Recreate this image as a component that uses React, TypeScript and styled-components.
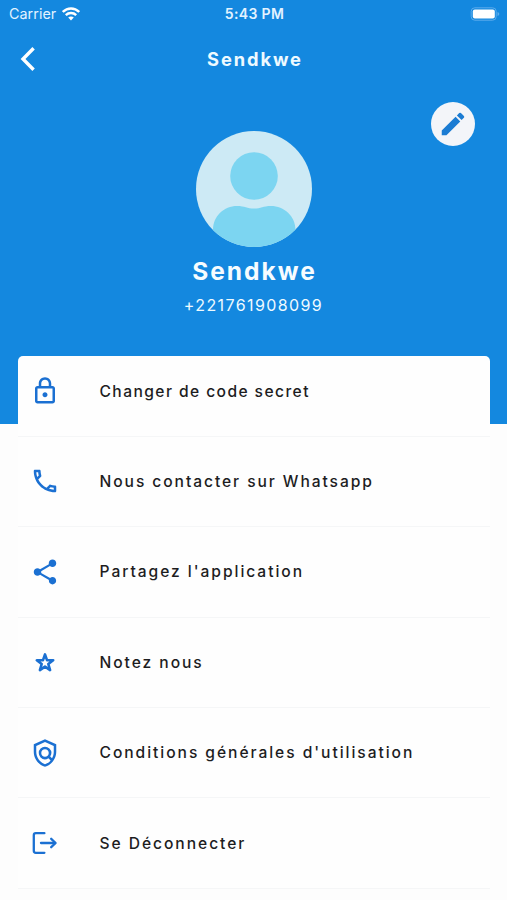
import React from "react";
import styled, { createGlobalStyle } from "styled-components";
import { MdEdit, MdOutlineLock, MdOutlinePhone, MdOutlinePolicy, MdShare } from "react-icons/md";

const GlobalStyle = createGlobalStyle`
  * { box-sizing: border-box; }
  body {
    margin: 0;
    background: #fdfdfd;
    font-family: Inter, "Liberation Sans", sans-serif;
  }
`;

const Screen = styled.main`
  width: 507px;
  height: 900px;
  overflow: hidden;
  background: linear-gradient(#1488df 0 424px, #fdfdfd 424px);
`;

const StatusBar = styled.div`
  display: grid;
  grid-template-columns: 1fr auto 1fr;
  align-items: center;
  height: 27px;
  padding: 0 7px 0 9px;
  color: #e3f3ff;
`;

const Carrier = styled.div`
  display: flex;
  align-items: center;
  gap: 6px;
  font-size: 14.3px;
  letter-spacing: 0.05px;
`;

const Time = styled.div`
  font-size: 14px;
  font-weight: 600;
  letter-spacing: 0.35px;
`;

const Battery = styled.svg`
  justify-self: end;
`;

const NavBar = styled.header`
  display: grid;
  grid-template-columns: 60px 1fr 60px;
  align-items: center;
  height: 64px;
`;

const BackButton = styled.button`
  display: flex;
  padding: 0 0 0 19px;
  border: 0;
  background: none;
`;

const Title = styled.h1`
  margin: 0;
  padding-left: 3px;
  text-align: center;
  font-size: 18.3px;
  font-weight: 700;
  letter-spacing: 1.9px;
  color: #eefaff;
`;

const Profile = styled.section`
  display: grid;
  grid-template-columns: 1fr 116px 1fr;
  height: 265px;
  padding: 10px 32px 0;
  align-content: start;
  color: #eefaff;
`;

const Avatar = styled.svg`
  grid-column: 2;
  margin-top: 30px;
`;

const EditButton = styled.button`
  display: flex;
  align-items: center;
  justify-content: center;
  justify-self: end;
  width: 44px;
  height: 44px;
  margin-top: 1px;
  padding: 0;
  border: 0;
  border-radius: 50%;
  background: #f3f5f9;
  color: #1b7cd3;
`;

const Name = styled.h2`
  grid-column: 1 / -1;
  margin: 8px 0 0;
  padding-left: 2px;
  text-align: center;
  font-size: 24.5px;
  line-height: 32px;
  font-weight: 700;
  letter-spacing: 2px;
  color: #f6fcff;
`;

const Phone = styled.p`
  grid-column: 1 / -1;
  margin: 7px 0 0;
  text-align: center;
  font-size: 16px;
  line-height: 22px;
  letter-spacing: 1.4px;
`;

const Menu = styled.ul`
  margin: 0 17px 0 18px;
  padding: 0;
  list-style: none;
  border-radius: 5px 5px 0 0;
  background: #fefefe;
`;

const MenuItem = styled.li`
  display: flex;
  align-items: center;
  height: 90.45px;
  border-bottom: 1.5px solid #f5f6f7;
  color: #1d1d1f;

  &:first-child {
    height: 80.7px;
    padding-bottom: 9px;
  }
`;

const IconSlot = styled.span`
  display: flex;
  justify-content: center;
  width: 54px;
  margin-right: 27.5px;
  color: #1b70d2;
`;

const Label = styled.span<{ $spacing: number }>`
  font-size: 15.6px;
  font-weight: 500;
  white-space: nowrap;
  letter-spacing: ${(p) => p.$spacing}px;
`;

const WifiIcon = () => (
  <svg width="18" height="14" viewBox="0 0 18 14" fill="none" stroke="#fff" strokeWidth="2.4">
    <path d="M.8 5C5.5.3 12.5.3 17.2 5" />
    <path d="M3.8 8.1c2.9-2.8 7.5-2.8 10.4 0" />
    <path d="M6.2 10.6c1.5-1.5 4.1-1.5 5.6 0L9 13.5z" fill="#fff" stroke="none" />
  </svg>
);

const StarIcon = () => (
  <svg width="30" height="30" viewBox="0 0 30 30" fill="none" stroke="currentColor" strokeWidth="2.6" strokeLinejoin="round">
    <path d="M15 7.4l2 5.7 6.2.2-4.9 3.7 1.8 6.1-5.1-3.5-5.1 3.5 1.8-6.1-4.9-3.7 6.2-.2z" />
  </svg>
);

const LogoutIcon = () => (
  <svg width="30" height="30" viewBox="0 0 30 30" fill="none" stroke="currentColor" strokeWidth="2.3" strokeLinecap="round" strokeLinejoin="round">
    <path d="M14.4 5.2H5.8Q3.8 5.2 3.8 7.2v15.6q0 2 2 2h8.6" />
    <path d="M11 15h14" />
    <path d="M21.2 10.8L25.6 15l-4.4 4.2" />
  </svg>
);

const items = [
  { label: "Changer de code secret", spacing: 1.42, icon: <MdOutlineLock size={30} /> },
  { label: "Nous contacter sur Whatsapp", spacing: 1.93, icon: <MdOutlinePhone size={30} /> },
  { label: "Partagez l'application", spacing: 1.95, icon: <MdShare size={30} /> },
  { label: "Notez nous", spacing: 1.95, icon: <StarIcon /> },
  { label: "Conditions générales d'utilisation", spacing: 1.95, icon: <MdOutlinePolicy size={30} /> },
  { label: "Se Déconnecter", spacing: 1.95, icon: <LogoutIcon /> },
];

export default function App() {
  return (
    <>
      <GlobalStyle />
      <Screen>
        <StatusBar>
          <Carrier>
            Carrier
            <WifiIcon />
          </Carrier>
          <Time>5:43 PM</Time>
          <Battery width="30" height="16" viewBox="0 0 30 16">
            <rect x="1.2" y="1.8" width="25" height="12.4" rx="3.6" fill="none" stroke="#5cacec" strokeWidth="1" />
            <rect x="2.8" y="3.4" width="22" height="9.2" rx="2" fill="#fff" />
            <path d="M27.5 6v4q1.8-.7 1.8-2t-1.8-2z" fill="#5cacec" />
          </Battery>
        </StatusBar>
        <NavBar>
          <BackButton aria-label="Retour">
            <svg width="18" height="26" viewBox="0 0 18 26" fill="none" stroke="#fff" strokeWidth="3.4">
              <path d="M14.6 2.2L4 13l10.6 10.8" />
            </svg>
          </BackButton>
          <Title>Sendkwe</Title>
        </NavBar>
        <Profile>
          <Avatar width="116" height="116" viewBox="0 0 116 116">
            <defs>
              <clipPath id="avatar-clip">
                <circle cx="58" cy="58" r="58" />
              </clipPath>
            </defs>
            <g clipPath="url(#avatar-clip)">
              <rect width="116" height="116" fill="#cdeaf5" />
              <circle cx="58" cy="45" r="23.8" fill="#7cd5f1" />
              <path d="M17 116V99C17 85 28 75 41 75c8 0 10 2.6 17 2.6S67 75 75 75c13 0 24.5 10 24.5 24v17z" fill="#7cd5f1" />
            </g>
          </Avatar>
          <EditButton aria-label="Modifier">
            <MdEdit size={30} />
          </EditButton>
          <Name>Sendkwe</Name>
          <Phone>+221761908099</Phone>
        </Profile>
        <Menu>
          {items.map((item) => (
            <MenuItem key={item.label}>
              <IconSlot>{item.icon}</IconSlot>
              <Label $spacing={item.spacing}>{item.label}</Label>
            </MenuItem>
          ))}
        </Menu>
      </Screen>
    </>
  );
}
